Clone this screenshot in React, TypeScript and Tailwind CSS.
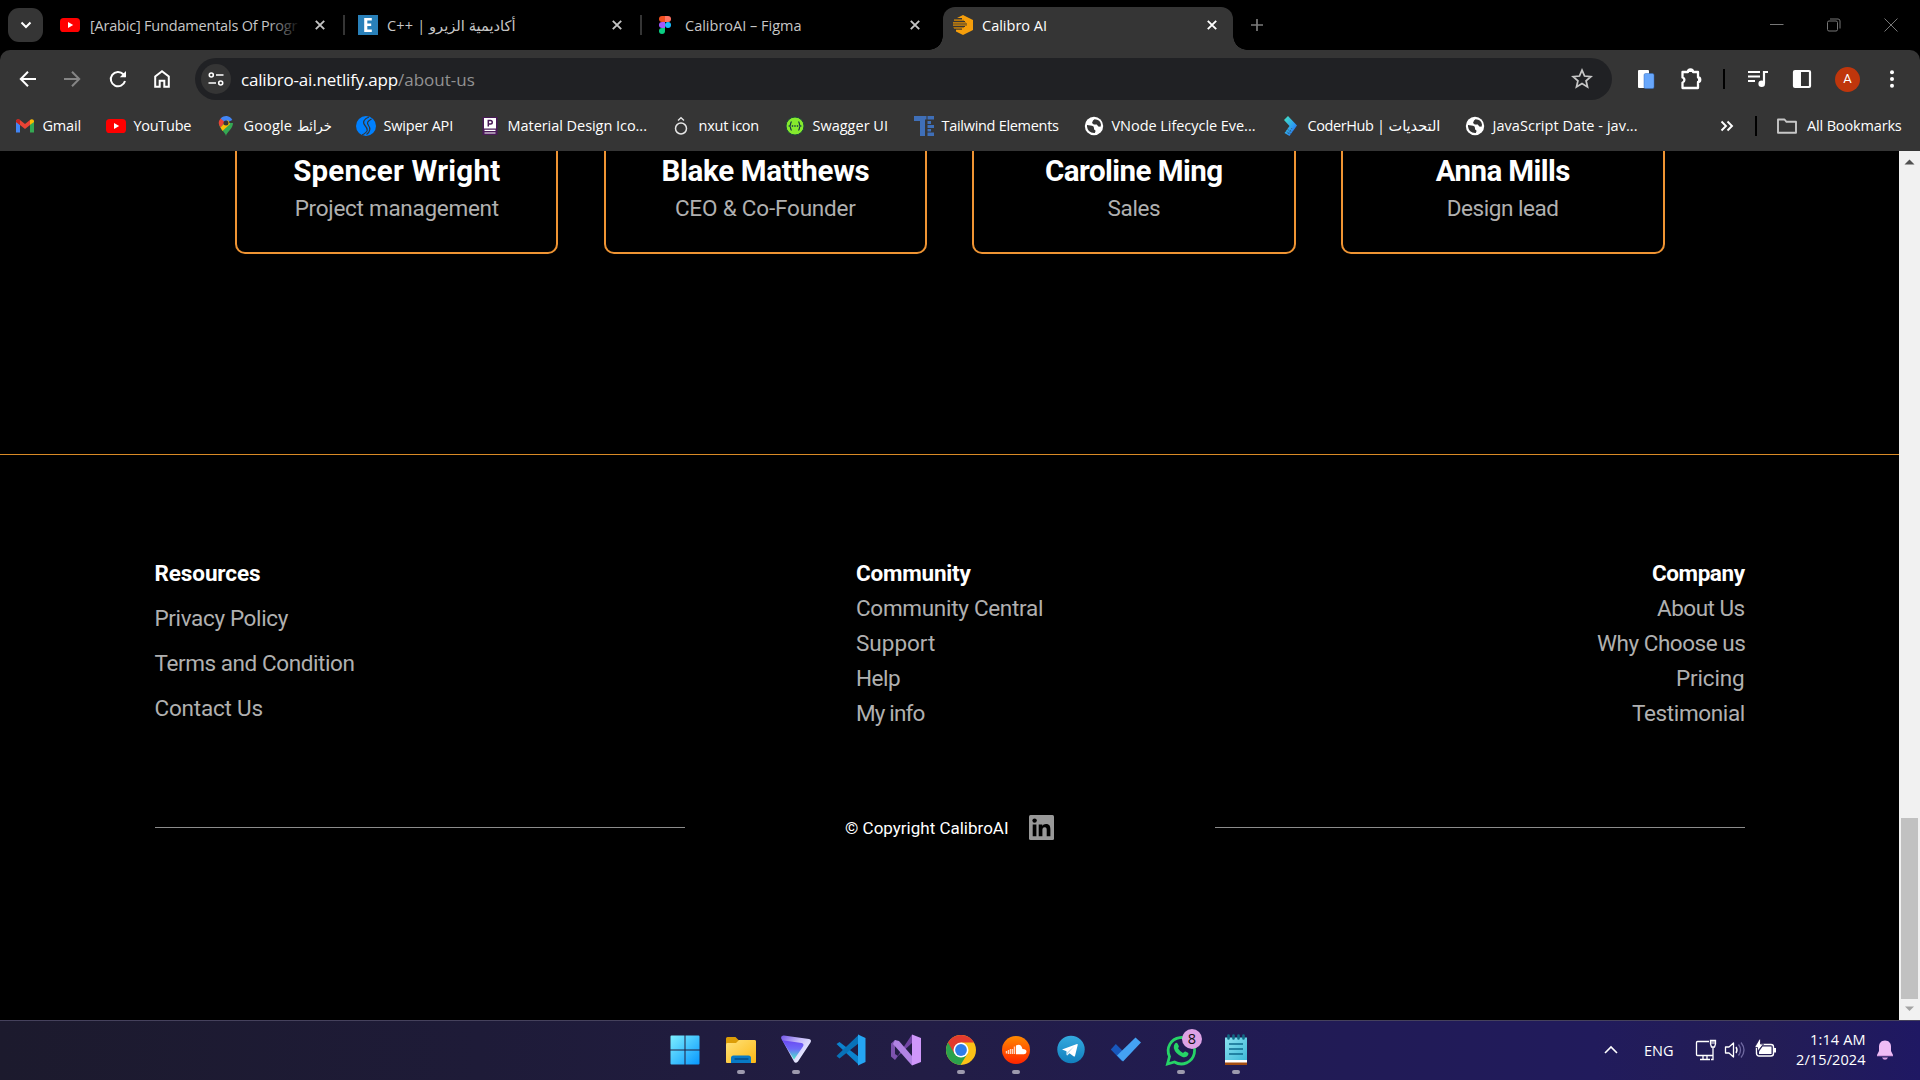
import { useLayoutEffect, useRef, useState, type ReactNode } from "react";

const UI = "font-['Open_Sans','DejaVu_Sans',sans-serif]";

/** One line of text whose tracking is tuned so that it fills `w` pixels. */
function Fit({ w, children, className = "", squeeze = false }: { w: number; children: string; className?: string; squeeze?: boolean }) {
  const ref = useRef<HTMLSpanElement>(null);
  const [fit, setFit] = useState({ spacing: 0, scale: 1 });
  useLayoutEffect(() => {
    const natural = ref.current!.offsetWidth;
    if (squeeze) setFit({ spacing: 0, scale: w / natural });
    else setFit({ spacing: (w - natural) / children.length, scale: 1 });
  }, [w, children, squeeze]);
  return (
    <span className={"block shrink-0 whitespace-nowrap " + className} style={{ width: w }}>
      <span
        ref={ref}
        className="inline-block origin-left"
        style={{ letterSpacing: fit.spacing, transform: fit.scale === 1 ? undefined : `scaleX(${fit.scale})` }}
      >
        {children}
      </span>
    </span>
  );
}

function Svg({ size = 20, box = "0 0 20 20", children, className = "" }: { size?: number; box?: string; children: ReactNode; className?: string }) {
  return (
    <svg width={size} height={size} viewBox={box} fill="none" className={"block shrink-0 " + className}>
      {children}
    </svg>
  );
}

/* ---------- favicons ---------- */
const YouTube = () => (
  <Svg><rect x="0" y="3" width="20" height="14" rx="3.6" fill="#f00" /><path d="M8 7v6l5.2-3z" fill="#fff" /></Svg>
);
const ElzeroIcon = () => (
  <Svg><path d="M0 0h20v20H0z" fill="#2980b9" /><path d="M6.200 3h7.600v2.600H9.300v2.900h3.900v2.500H9.300v3.400h4.500V17H6.200z" fill="#fff" /></Svg>
);
const Figma = () => (
  <Svg>
    <path d="M10 1H7a3 3 0 0 0 0 6h3z" fill="#f24e1e" />
    <path d="M10 1h3a3 3 0 0 1 0 6h-3z" fill="#ff7262" />
    <path d="M10 7H7a3 3 0 0 0 0 6h3z" fill="#a259ff" />
    <circle cx="13" cy="10" r="3" fill="#1abcfe" />
    <path d="M10 13H7a3 3 0 1 0 3 3z" fill="#0acf83" />
  </Svg>
);
const Calibro = () => (
  <Svg>
    <path d="M10 0l10 5v10l-10 5-7-3.500V15h6v-1.500H1V12h11v-1H0V9.600h14V8.400H0V7h12V6H1V4.500h8V3H4z" fill="#f59e0b" />
    <path d="M1 5.300h10M0 7.800h13M0 10.300h14M0 12.600h11M3 14.500h6" stroke="#8a5d12" strokeWidth=".8" />
  </Svg>
);
const Gmail = () => (
  <Svg>
    <path d="M1 5v11.500h4V9z" fill="#4285f4" /><path d="M19 5v11.500h-4V9z" fill="#34a853" />
    <path d="M1 5.500C1 3.300 3.300 2.600 5 4l5 4 5-4v5l-5 4-5-4-4-3z" fill="#ea4335" />
    <path d="M15 4c1.700-1.400 4-.7 4 1.500V6l-4 3z" fill="#fbbc04" /><path d="M1 5.500C1 3.500 3.300 2.600 5 4v5L1 6z" fill="#c5221f" />
  </Svg>
);
const Maps = () => (
  <Svg>
    <path d="M10 20c.5-4 7-7 7-13H3c0 6 6.500 9 7 13z" fill="#34a853" />
    <path d="M4.600 2.600A7 7 0 0 0 4.500 11.500L10 5z" fill="#ea4335" />
    <path d="M4.600 2.600A7 7 0 0 1 16.300 4L10 7z" fill="#4285f4" />
    <path d="M4.500 11.500L12 4l2 4-7.500 7z" fill="#fbbc04" />
    <circle cx="10" cy="7" r="2.500" fill="#353535" />
  </Svg>
);
const Swiper = () => (
  <Svg><circle cx="10" cy="10" r="10" fill="#0080ff" /><path d="M13 1C8 3 6 6 9 9.500s4 6-3 9.500M15.500 3c-4 2-5 4-3 6.500s2 6-2 9" stroke="#353535" strokeWidth="1.200" /></Svg>
);
const Material = () => (
  <Svg><path d="M2.500 1h15v18h-15z" fill="#4a1a59" /><path d="M4 2h12v10.500H4z" fill="#fff" /><path d="M4.500 14.300h11M4.500 17h11" stroke="#fff" strokeWidth="1.200" /><path d="M8.300 10.500V4.500h2.200a1.700 1.700 0 0 1 0 3.500H8.300" stroke="#4a1a59" strokeWidth="1.500" /></Svg>
);
const Nxut = () => (
  <Svg><circle cx="10" cy="12.500" r="5.500" stroke="#e6e6e6" strokeWidth="1.500" /><path d="M7 4.500l3-2.800 3 2.800" stroke="#e6e6e6" strokeWidth="1.300" /></Svg>
);
const Swagger = () => (
  <Svg>
    <circle cx="10" cy="10" r="9" fill="#85ea2d" stroke="#1b4a3a" strokeWidth="1" />
    <path d="M6.800 5.800c-2 0-.3 3.500-2.300 4.200 2 .7.300 4.200 2.300 4.200M13.200 5.800c2 0 .3 3.500 2.300 4.200-2 .7-.3 4.200-2.300 4.200" stroke="#173647" strokeWidth="1.200" />
    <path d="M6.800 9.300h1.400v1.400H6.800zM9.300 9.300h1.400v1.400H9.300zM11.800 9.300h1.400v1.400h-1.400z" fill="#173647" />
  </Svg>
);
const TailwindElements = () => (
  <Svg><path d="M0 0h12.500v3.500H11V20H6V5H0zM13.500 0H20v3.500h-6.500zM13.500 5h3.500v3h-3.500zM13.500 9H20v3h-6.500zM13.500 13h3.500v2.500h-3.500zM13.500 16.500H20V20h-6.500z" fill="#3f6fb8" /></Svg>
);
const Globe = () => (
  <Svg>
    <circle cx="10" cy="10" r="9.200" fill="#fff" />
    <path d="M3 9l5 .8q2 .4 2 2.200v1.500q1.500.3 1.500 1.800L10.800 17q-7 .3-7.800-6.500z" fill="#353535" />
    <path d="M10.500 3.200L9 4.500 8 7l1.800 1.500h3l1.500 2 2.200.3.500-2Q16.500 3.500 10.500 3.200z" fill="#353535" />
  </Svg>
);
const CoderHub = () => (
  <Svg>
    <defs><linearGradient id="coder" x1="0" y1="0" x2="1" y2="1"><stop stopColor="#45e6c0" /><stop offset=".6" stopColor="#2c9cf2" /><stop offset="1" stopColor="#2f4bd0" /></linearGradient></defs>
    <path d="M8 0l9 9.500L9.500 20l-5-3 5-7L4 4z" fill="url(#coder)" />
    <path d="M5 15l6 3M6.500 13l6 3M8 18l4-6" stroke="#353535" strokeWidth=".6" strokeDasharray="1 1" />
  </Svg>
);

/* ---------- browser chrome ---------- */
function Cross({ bright = false }: { bright?: boolean }) {
  return <Svg size={10} box="0 0 10 10"><path d="M.8.8l8.400 8.400M9.200.8L.8 9.200" stroke={bright ? "#fff" : "#c4c4c4"} strokeWidth="1.900" /></Svg>;
}

function Tab({ icon, children, className }: { icon: ReactNode; children: ReactNode; className: string }) {
  return (
    <div className={"flex h-[50px] shrink-0 items-center " + className}>
      {icon}
      <div className="ml-[9px] flex-1 overflow-hidden pt-[2px]">{children}</div>
      <Cross />
    </div>
  );
}

const TabBar = () => (
  <div className="flex h-[50px] items-center bg-black text-[14.5px] text-[#c7c7c7]">
    <div className="ml-2 flex h-[34px] w-[35px] items-center justify-center rounded-[11px] bg-[#353535]">
      <Svg size={12} box="0 0 12 12"><path d="M1.500 3.500L6 8l4.500-4.500" stroke="#fff" strokeWidth="2" /></Svg>
    </div>
    <Tab icon={<YouTube />} className="ml-[17px] w-[265px]">
      <div className="relative">
        <Fit w={207} className="ml-px">[Arabic] Fundamentals Of Progr</Fit>
        <div className="absolute inset-y-0 left-[178px] w-[34px] bg-linear-to-r from-transparent to-black" />
      </div>
    </Tab>
    <div className="ml-[18px] h-5 w-[2px] bg-[#353535]" />
    <Tab icon={<ElzeroIcon />} className="ml-[13px] w-[264px]">
      <div className="flex">
        <Fit w={38}>C++ |</Fit>
        <Fit w={87} className="ml-[4px]" squeeze>أكاديمية الزيرو</Fit>
      </div>
    </Tab>
    <div className="ml-[18px] h-5 w-[2px] bg-[#353535]" />
    <Tab icon={<Figma />} className="ml-[13px] w-[265px]"><div className="pl-[1px]"><Fit w={117}>CalibroAI – Figma</Fit></div></Tab>
    <div className="relative ml-[23px] flex h-[43px] w-[290px] items-center self-end rounded-t-[12px] bg-[#353535] pl-2.5 text-white">
      <div className="absolute bottom-0 -left-[14px] size-[14px] bg-[radial-gradient(circle_at_0_0,#000_13.500px,#353535_14px)]" />
      <div className="absolute -right-[14px] bottom-0 size-[14px] bg-[radial-gradient(circle_at_100%_0,#000_13.500px,#353535_14px)]" />
      <div className="flex h-[36px] flex-1 items-center self-start">
        <Calibro />
        <Fit w={65} className="ml-[9px] pt-px">Calibro AI</Fit>
        <div className="mr-[16px] ml-auto"><Cross bright /></div>
      </div>
    </div>
    <Svg size={14} box="0 0 14 14" className="ml-[17px]"><path d="M7 1v12M1 7h12" stroke="#7b7b7b" strokeWidth="1.700" /></Svg>
    <div className="mr-[22px] ml-auto flex items-center gap-[43px]">
      <Svg size={14} box="0 0 14 14"><path d="M0 6.500h13.500" stroke="#777" /></Svg>
      <Svg size={14} box="0 0 14 14"><rect x=".5" y="3" width="10" height="10" rx="1.500" stroke="#777" /><path d="M3 1h8a2 2 0 0 1 2 2v7.500" stroke="#777" /></Svg>
      <Svg size={14} box="0 0 14 14"><path d="M.5.5l13 13M13.500.5l-13 13" stroke="#777" /></Svg>
    </div>
  </div>
);

const Toolbar = () => (
  <div className="flex h-[58px] items-center text-white">
    <Svg className="ml-[18px]"><path d="M18 10H3M10 2.800L2.800 10l7.200 7.200" stroke="#fff" strokeWidth="2" /></Svg>
    <Svg className="ml-[24px]"><path d="M2 10h15M10 2.800l7.200 7.200-7.200 7.200" stroke="#858585" strokeWidth="2" /></Svg>
    <Svg className="ml-[26px]"><path d="M17 12a7.200 7.200 0 1 1-1.700-6.800L17.500 7.500" stroke="#fff" strokeWidth="2" /><path d="M18 2v6.200h-6.200z" fill="#fff" /></Svg>
    <Svg className="ml-[24px]"><path d="M3.200 7.500L10 2.300l6.800 5.200v10.300h-4.500v-6.100H7.700v6.100H3.200z" stroke="#fff" strokeWidth="2" /></Svg>
    <div className="ml-[23px] flex h-[42px] w-[1417px] items-center rounded-full bg-[#202124] text-[17px]">
      <div className="ml-[6px] flex size-[30px] items-center justify-center rounded-full bg-[#353535]">
        <Svg size={16} box="0 0 16 16"><circle cx="3.300" cy="4" r="2" stroke="#fff" strokeWidth="1.600" /><circle cx="12.700" cy="12" r="2" stroke="#fff" strokeWidth="1.600" /><path d="M8 4h7.500M.5 12H8" stroke="#fff" strokeWidth="1.700" /></Svg>
      </div>
      <Fit w={157} className="ml-[10px] pt-px">calibro-ai.netlify.app</Fit>
      <Fit w={77} className="pt-px text-[#929292]">/about-us</Fit>
      <Svg size={22} className="mr-[19px] ml-auto"><path d="M10 2l2.300 5.300 5.800.5-4.400 3.800 1.300 5.600-5-3-5 3 1.300-5.600-4.400-3.800 5.800-.5z" stroke="#c7c7c7" strokeWidth="1.600" /></Svg>
    </div>
    <Svg className="ml-[24px]"><rect x="2" y="1" width="11" height="18" rx="1" fill="#fff" /><rect x="8" y="4.500" width="10" height="15" rx="1.500" fill="#68a7fb" stroke="#356fc0" strokeWidth=".5" /></Svg>
    <Svg size={24} box="0 0 24 24" className="ml-[23px]"><path d="M3.500 5H9a2.500 2.500 0 0 1 5 0h5v5.500a2.200 2.200 0 0 1 0 4.500v6H3.500v-5.500a2.600 2.600 0 0 0 0-5z" stroke="#fff" strokeWidth="2.300" strokeLinejoin="round" /><path d="M9 5a2.500 2.500 0 0 1 5 0zM19 10.500a2.200 2.200 0 0 1 0 4.500z" fill="#fff" /></Svg>
    <div className="ml-[20px] h-[20px] w-[2px] bg-black" />
    <Svg size={22} box="0 0 22 22" className="ml-[22px]"><path d="M1 4h12M1 8.500h12M1 13h7" stroke="#fff" strokeWidth="2" /><path d="M17 15.500V4h4" stroke="#fff" strokeWidth="2.200" /><circle cx="14.700" cy="15.700" r="3.300" fill="#fff" /></Svg>
    <Svg className="ml-[23px]"><rect x="2" y="2" width="16" height="16" rx="1" stroke="#fff" strokeWidth="2.200" /><path d="M2 2h7v16H2z" fill="#fff" /></Svg>
    <div className="ml-[23px] flex size-[25px] items-center justify-center rounded-full bg-[#bf360c] font-[Roboto] text-[13px]">A</div>
    <Svg className="ml-[22px]"><circle cx="10" cy="3.300" r="2" fill="#fff" /><circle cx="10" cy="10" r="2" fill="#fff" /><circle cx="10" cy="16.700" r="2" fill="#fff" /></Svg>
  </div>
);

function Bookmark({ icon, className, children }: { icon: ReactNode; className: string; children: ReactNode }) {
  return <div className={"flex shrink-0 items-center " + className}>{icon}<div className="ml-[7.5px] flex">{children}</div></div>;
}

const Bookmarks = () => (
  <div className="flex h-[43px] items-center pb-[7px] pl-[15px] text-[14.5px] text-white">
    <Bookmark icon={<Gmail />} className="w-[91px]"><Fit w={38}>Gmail</Fit></Bookmark>
    <Bookmark icon={<YouTube />} className="w-[110px]"><Fit w={58}>YouTube</Fit></Bookmark>
    <Bookmark icon={<Maps />} className="w-[140px]"><Fit w={49}>Google</Fit><Fit w={35} className="ml-[4px]" squeeze>خرائط</Fit></Bookmark>
    <Bookmark icon={<Swiper />} className="w-[124px]"><Fit w={70}>Swiper API</Fit></Bookmark>
    <Bookmark icon={<Material />} className="w-[191px]"><Fit w={139}>Material Design Ico...</Fit></Bookmark>
    <Bookmark icon={<Nxut />} className="w-[114px]"><Fit w={61}>nxut icon</Fit></Bookmark>
    <Bookmark icon={<Swagger />} className="w-[129px]"><Fit w={75}>Swagger UI</Fit></Bookmark>
    <Bookmark icon={<TailwindElements />} className="w-[170px]"><Fit w={117}>Tailwind Elements</Fit></Bookmark>
    <Bookmark icon={<Globe />} className="w-[196px]"><Fit w={144}>VNode Lifecycle Eve...</Fit></Bookmark>
    <Bookmark icon={<CoderHub />} className="w-[185px]"><Fit w={77}>CoderHub |</Fit><Fit w={52} className="ml-[4px]" squeeze>التحديات</Fit></Bookmark>
    <Bookmark icon={<Globe />} className="w-[200px]"><Fit w={145}>JavaScript Date - jav...</Fit></Bookmark>
    <Svg size={14} box="0 0 14 14" className="ml-[55px]"><path d="M1.500 2.500L6 7l-4.500 4.500M7.500 2.500L12 7l-4.500 4.500" stroke="#fff" strokeWidth="1.900" /></Svg>
    <div className="ml-[21px] h-5 w-[2px] bg-black" />
    <Svg size={22} box="0 0 22 22" className="ml-[19px]"><path d="M2 4.500h6.500l2 2.300H20v11H2z" stroke="#c7c7c7" strokeWidth="1.900" strokeLinejoin="round" /></Svg>
    <Fit w={95} className="ml-[9px]">All Bookmarks</Fit>
  </div>
);

/* ---------- web page ---------- */
const team = [
  { name: "Spencer Wright", nameW: 207, role: "Project management", roleW: 204 },
  { name: "Blake Matthews", nameW: 208, role: "CEO & Co-Founder", roleW: 181 },
  { name: "Caroline Ming", nameW: 178, role: "Sales", roleW: 53 },
  { name: "Anna Mills", nameW: 134, role: "Design lead", roleW: 112 },
];

type Link = [string, number];

function Column({ title, links, className }: { title: Link; links: Link[]; className: string }) {
  return (
    <div className={"flex flex-col " + className}>
      <Fit w={title[1]} className="font-bold text-white">{title[0]}</Fit>
      {links.map(([text, w]) => <Fit key={text} w={w}>{text}</Fit>)}
    </div>
  );
}

const Page = () => (
  <main className="h-[869px] w-[1899px] overflow-hidden bg-black font-[Roboto] text-[22.5px] text-[#b0b0b0]">
    <div className="flex justify-between pr-[234.5px] pl-[235px]">
      {team.map((m) => (
        <section key={m.name} className="flex h-[103px] w-[323.4px] flex-col items-center rounded-b-[10px] border-2 border-t-0 border-[#ef9433]">
          <Fit w={m.nameW} className="text-[29.5px] leading-[40px] font-bold text-white">{m.name}</Fit>
          <Fit w={m.roleW} className="mt-[2px] leading-[30px]">{m.role}</Fit>
        </section>
      ))}
    </div>
    <footer className="mt-[200px] border-t border-[#d98a26] pr-[154px] pl-[155px] pt-[101px]">
      <div className="flex h-[170px] leading-[35px]">
        <Column className="-ml-[0.5px] w-[701.5px] gap-[10px]" title={["Resources", 106]} links={[["Privacy Policy", 134], ["Terms and Condition", 200], ["Contact Us", 108]]} />
        <Column className="w-[300px]" title={["Community", 115]} links={[["Community Central", 187], ["Support", 79], ["Help", 44], ["My info", 68]]} />
        <Column className="ml-auto items-end" title={["Company", 93]} links={[["About Us", 88], ["Why Choose us", 148], ["Pricing", 69], ["Testimonial", 113]]} />
      </div>
      <div className="mt-[87px] flex h-[28px] items-center justify-between">
        <div className="h-px w-[530px] bg-[#8c8c8c]" />
        <div className="mr-px flex items-center gap-5">
          <Fit w={164} className="pt-[3px] text-[17px] text-white">© Copyright CalibroAI</Fit>
          <Svg size={25} box="0 0 25 25">
            <rect width="25" height="25" rx="1.500" fill="#999" />
            <path d="M3.700 9.400h3.700v11.900H3.700zM9.700 9.400h3.600V11c.6-1 1.900-1.900 3.700-1.900 3.700 0 4.400 2.400 4.400 5.600v6.600h-3.700v-5.800c0-1.400 0-3.200-2-3.200s-2.300 1.500-2.300 3.100v5.900H9.700z" fill="#000" />
            <circle cx="5.600" cy="5.600" r="2.200" fill="#000" />
          </Svg>
        </div>
        <div className="h-px w-[530px] bg-[#8c8c8c]" />
      </div>
    </footer>
  </main>
);

const Scrollbar = () => (
  <div className="flex w-[21px] flex-col items-center justify-between bg-[#f1f1f1]">
    <Svg size={21} box="0 0 21 21"><path d="M5.500 13.500l5-5 5 5z" fill="#505050" /></Svg>
    <div className="mt-auto h-[181px] w-[17px] bg-[#c1c1c1]" />
    <Svg size={21} box="0 0 21 21"><path d="M6 7.500h9l-4.500 4.500z" fill="#a3a3a3" /></Svg>
  </div>
);

/* ---------- taskbar ---------- */
function App32({ children, open = false }: { children: ReactNode; open?: boolean }) {
  return (
    <div className="flex w-[55px] flex-col items-center">
      <svg width="32" height="32" viewBox="0 0 32 32" fill="none" className="overflow-visible">{children}</svg>
      <div className={"mt-[4px] h-1 w-2 rounded-full " + (open ? "bg-[#9d9aae]" : "")} />
    </div>
  );
}

const Taskbar = () => (
  <div className="flex h-[60px] border-t border-[#45415c] bg-[linear-gradient(90deg,#1c1a2d_0%,#1e1b38_25%,#221d45_48%,#211b55_68%,#211b5c_83%,#231d55_92%,#1f1863_100%)]">
    <div className="ml-[657px] flex pt-[13px]">
      <App32>
        <defs><linearGradient id="win" x1="0" y1="0" x2="1" y2="1"><stop stopColor="#7defff" /><stop offset="1" stopColor="#0797fd" /></linearGradient></defs>
        <path d="M1.500 2.500a1 1 0 0 1 1-1h13v14h-14zM16.500 1.500h13a1 1 0 0 1 1 1v13h-14zM1.500 16.500h14v14h-13a1 1 0 0 1-1-1zM16.500 16.500h14v13a1 1 0 0 1-1 1h-13z" fill="url(#win)" />
      </App32>
      <div className="ml-px flex">
        <App32 open>
          <defs><linearGradient id="fold" x1="0" y1="0" x2="1" y2="1"><stop stopColor="#ffe27a" /><stop offset="1" stopColor="#fcb814" /></linearGradient></defs>
          <path d="M1 4.500A1.500 1.500 0 0 1 2.500 3h8l3 3H29a2 2 0 0 1 2 2v8H1z" fill="#dc9d07" />
          <path d="M1 11q0-2 1-2h9l3-3h15.500A1.500 1.500 0 0 1 31 7.500V28q0 1-1 1H2q-1 0-1-1z" fill="url(#fold)" />
          <path d="M6 29v-5a2.500 2.500 0 0 1 2.500-2.500h15A2.500 2.500 0 0 1 26 24v5z" fill="#087ac6" /><path d="M10 25h13" stroke="#034b86" strokeWidth="1.300" strokeLinecap="round" />
        </App32>
        <App32 open>
          <defs>
            <linearGradient id="vpn1" x1="0" y1="0" x2=".9" y2=".7"><stop stopColor="#7255e8" /><stop offset=".5" stopColor="#c4b8fa" /><stop offset="1" stopColor="#f0f6ff" /></linearGradient>
            <linearGradient id="vpn2" x1=".5" y1="0" x2=".5" y2="1"><stop stopColor="#6a43f0" /><stop offset=".5" stopColor="#6e6af8" /><stop offset="1" stopColor="#4af0c8" /></linearGradient>
          </defs>
          <path d="M1 4q0-3 3-2.500L29 5q3 .5 1.500 3.500L18 27.500q-2.500 2.500-4 0z" fill="url(#vpn1)" />
          <path d="M1.200 4.500Q2 6 4 6.500l17.500 2.500q3 .5 1.500 3.500l-9 13z" fill="url(#vpn2)" />
        </App32>
        <App32>
          <path d="M1.500 10l3-2L24 23v8z" fill="#0b83cf" /><path d="M1.500 22l3 2.500L24 9V.5z" fill="#0872b8" />
          <path d="M23 .5L30.500 4v24L23 31.500z" fill="#25a5f3" />
        </App32>
        <App32>
          <path d="M1 9.500L5 6l3 4-3 2v8l3 2-3 4-4-3.500z" fill="#7d53ae" />
          <path d="M5 26L22 .5V9L8 22z" fill="#7044a3" />
          <path d="M5 6l4 1 13 15v9.500L3 10z" fill="#b184e4" /><path d="M22 .5L31 4v24l-9 3.500z" fill="#cf97fa" />
        </App32>
        <App32 open>
          <circle cx="16" cy="16" r="15" fill="#fbc116" />
          <path d="M16 16L3 8.500A15 15 0 0 0 15.500 31l7-11.500z" fill="#2ba24c" />
          <path d="M16 8.500h13A15 15 0 0 0 3 8.500L9.500 19.700z" fill="#e33b2e" />
          <circle cx="16" cy="16" r="7.500" fill="#fff" /><circle cx="16" cy="16" r="5.900" fill="#2f7de9" />
        </App32>
        <App32 open>
          <defs><linearGradient id="sc" x1="0" y1="0" x2="0" y2="1"><stop stopColor="#ff8a00" /><stop offset="1" stopColor="#ff2400" /></linearGradient></defs>
          <circle cx="16" cy="16" r="14" fill="url(#sc)" />
          <path d="M16 11.500q5-2.500 6.500 3.500 4 0 4 2.700 0 2.300-2.500 2.500h-8z" fill="#fff" />
          <path d="M6.500 17v2.500M8.500 16v4M10.500 15v5M12.500 15v5M14.500 12.500V20" stroke="#ffd5be" strokeWidth="1.400" />
        </App32>
        <App32>
          <defs><linearGradient id="tg" x1="0" y1="0" x2="0" y2="1"><stop stopColor="#34aadf" /><stop offset="1" stopColor="#117fbd" /></linearGradient></defs>
          <circle cx="16" cy="15.500" r="13.700" fill="url(#tg)" />
          <path d="M7 15.500l15-5.500q1-.3.700 1L20 22q-.3 1-1.500.3l-4-3-2 2q-1 .5-1-1v-3z" fill="#fff" /><path d="M12 18.500l7.500-6.500-6.500 7.500-.8 1.800z" fill="#b7d7e9" />
        </App32>
        <App32>
          <path d="M.8 15.500l5-5.500 10 10-4 7z" fill="#1858bd" /><path d="M25.500 3.500l5.500 5-18 19-6-6z" fill="#44a2f3" />
        </App32>
        <App32 open>
          <path d="M2.500 30l2-7.500A13.200 13.200 0 1 1 9.500 28z" stroke="#26d367" strokeWidth="2.800" />
          <path d="M10 9.500q1.500-1.500 2.500 0l1.300 2.500q.3 1-.8 2.200 2 3.500 5 4.800 1.500-2 2.500-1.500l2.500 1.300q1 .7 0 2.400-2 3-6 1.500Q10 19.500 8.800 14q-.3-3 1.200-4.500z" fill="#26d367" />
          <circle cx="27" cy="5" r="10" fill="#dda2e5" />
          <text x="27" y="10.300" textAnchor="middle" fontSize="14.500" fill="#111" className={UI}>8</text>
        </App32>
        <App32 open>
          <defs><linearGradient id="note" x1="0" y1="0" x2="1" y2="1"><stop stopColor="#8ce3f2" /><stop offset="1" stopColor="#3db9d8" /></linearGradient></defs>
          <path d="M5 26h22v5H5z" fill="#a44d10" /><path d="M5 25h22v3.500H5z" fill="#fff" /><path d="M5 3.500h22V26H5z" fill="url(#note)" />
          <path d="M8.500 1.500v3M13.500 1.500v3M18.500 1.500v3M23.500 1.500v3" stroke="#116b86" strokeWidth="2.600" strokeLinecap="round" />
          <path d="M9 10h14M9 15h14M9 20h14" stroke="#0e6b8e" strokeWidth="1.700" />
        </App32>
      </div>
    </div>
    <div className="ml-auto flex items-center pr-[25px] pb-px text-[14.500px] text-white">
      <Svg size={14} box="0 0 14 14"><path d="M1 10l6-6 6 6" stroke="#fff" strokeWidth="1.600" /></Svg>
      <Fit w={30} className="ml-[26px] pt-px">ENG</Fit>
      <Svg size={22} box="0 0 22 22" className="ml-[21px]">
        <path d="M14 2.500H2.500a1 1 0 0 0-1 1v12a1 1 0 0 0 1 1H18M8 17v3.500M12 17v3.500M5 20.500h10" stroke="#fff" strokeWidth="1.300" />
        <path d="M15.500 1.500h5v3.500l-1 3h-3l-1-3zM18 8v12.500h-2" stroke="#fff" strokeWidth="1.300" /><path d="M15.500 2h5v3h-5z" fill="#fff" opacity=".5" />
      </Svg>
      <Svg size={22} box="0 0 22 22" className="ml-[7px]">
        <path d="M1.500 8h3.500L9.500 4v14L5 14H1.500z" stroke="#fff" strokeWidth="1.300" strokeLinejoin="round" /><path d="M12 8q2 3 0 6" stroke="#fff" strokeWidth="1.400" />
        <path d="M14.500 5.500q4 5.500 0 11M17 3.500q6 7.500 0 15" stroke="#6e68a0" strokeWidth="1.300" />
      </Svg>
      <Svg size={22} box="0 0 22 22" className="ml-[9px]">
        <rect x="1.500" y="5.500" width="17" height="11.500" rx="2.500" stroke="#fff" strokeWidth="1.400" /><path d="M4 15V12.500l3.500-5h9V15z" fill="#fff" /><path d="M19 9v4.500h2V9z" fill="#fff" />
        <path d="M4.500 0L-.5 8.500h3V12.500L8.500 5H5.500V0z" fill="#fff" stroke="#241d50" strokeWidth=".8" />
      </Svg>
      <div className="ml-[19px] flex flex-col items-end leading-5">
        <Fit w={56}>1:14 AM</Fit>
        <Fit w={70}>2/15/2024</Fit>
      </div>
      <Svg size={20} className="ml-[9px]"><path d="M10 .5c-4 0-6 3-6 6v4.500l-2 4v1h16v-1l-2-4V6.500c0-3-2-6-6-6z" fill="#eebcf5" /><path d="M2 15h16v1.300H2zM7 17.500h6q-1 2.300-3 2.300t-3-2.300z" fill="#d59ce0" /></Svg>
    </div>
  </div>
);

export default function App() {
  return (
    <div className={"flex h-[1080px] w-[1920px] flex-col overflow-hidden bg-black " + UI}>
      <TabBar />
      <div className="h-[101px] shrink-0 rounded-t-[10px] bg-[#353535]">
        <Toolbar />
        <Bookmarks />
      </div>
      <div className="flex h-[869px] shrink-0">
        <Page />
        <Scrollbar />
      </div>
      <Taskbar />
    </div>
  );
}
